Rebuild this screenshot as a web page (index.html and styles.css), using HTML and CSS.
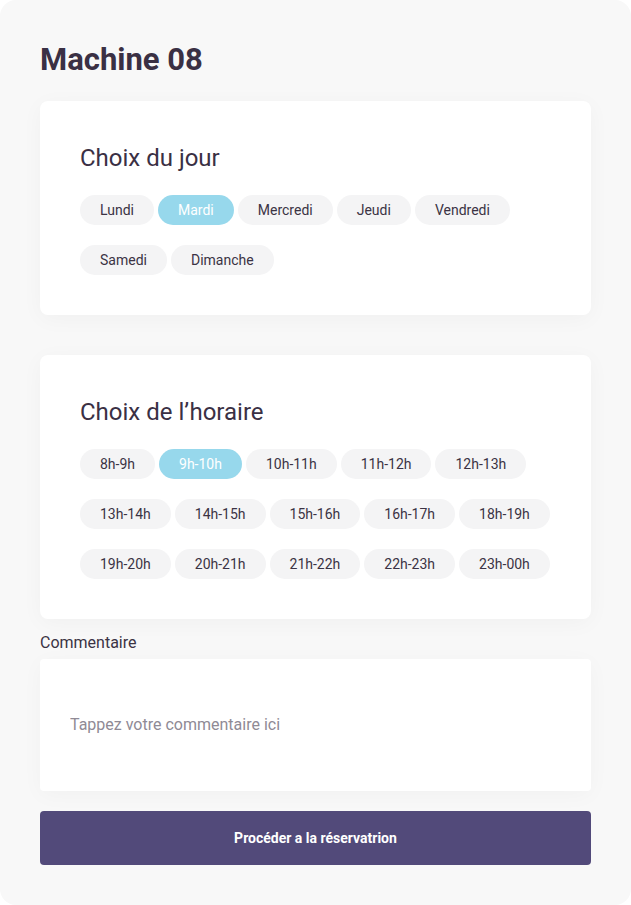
FILE: index.html
```html
<!DOCTYPE html>
<html lang="fr">
<head>
<meta charset="utf-8">
<title>Machine 08</title>
<link rel="stylesheet" href="styles.css">
</head>
<body>
<main class="page">
  <h1 class="title">Machine 08</h1>

  <section class="card">
    <h2 class="card-title">Choix du jour</h2>
    <div class="chips">
      <button class="chip">Lundi</button>
      <button class="chip chip-active">Mardi</button>
      <button class="chip">Mercredi</button>
      <button class="chip">Jeudi</button>
      <button class="chip">Vendredi</button>
      <button class="chip">Samedi</button>
      <button class="chip">Dimanche</button>
    </div>
  </section>

  <section class="card card-hours">
    <h2 class="card-title">Choix de l’horaire</h2>
    <div class="chips">
      <button class="chip">8h-9h</button>
      <button class="chip chip-active">9h-10h</button>
      <button class="chip">10h-11h</button>
      <button class="chip">11h-12h</button>
      <button class="chip">12h-13h</button>
      <button class="chip">13h-14h</button>
      <button class="chip">14h-15h</button>
      <button class="chip">15h-16h</button>
      <button class="chip">16h-17h</button>
      <button class="chip">18h-19h</button>
      <button class="chip">19h-20h</button>
      <button class="chip">20h-21h</button>
      <button class="chip">21h-22h</button>
      <button class="chip">22h-23h</button>
      <button class="chip">23h-00h</button>
    </div>
  </section>

  <label class="comment-label" for="comment">Commentaire</label>
  <div class="comment-box">
    <textarea id="comment" class="comment-input" placeholder="Tappez votre commentaire ici"></textarea>
  </div>

  <button class="submit">Procéder a la réservatrion</button>
</main>
</body>
</html>
```

FILE: styles.css
```css
* {
  box-sizing: border-box;
}

html, body {
  margin: 0;
  padding: 0;
  background: #ffffff;
}

body {
  font-family: Roboto, "Liberation Sans", Arial, sans-serif;
  color: #3b3344;
}

.page {
  width: 631px;
  height: 905px;
  background: #f8f8f8;
  border-radius: 16px;
  padding: 42px 40px 40px 40px;
  display: flex;
  flex-direction: column;
}

.title {
  margin: 0 0 24px 0;
  font-size: 31px;
  font-weight: 700;
  line-height: 35px;
  color: #3a3044;
}

.card {
  flex-shrink: 0;
  background: #ffffff;
  border-radius: 8px;
  box-shadow: 0 4px 22px rgba(0, 0, 0, 0.035);
  padding: 43px 36px 40px 40px;
}

.card-hours {
  margin-top: 40px;
}

.card-title {
  margin: 0 0 23px 0;
  font-size: 24px;
  font-weight: 400;
  line-height: 28px;
  color: #3a3044;
}

.chips {
  display: flex;
  flex-wrap: wrap;
  column-gap: 4px;
  row-gap: 20px;
}

.chip {
  height: 30px;
  padding: 0 20px;
  border: none;
  border-radius: 15px;
  background: #f4f4f5;
  font-family: Roboto, "Liberation Sans", Arial, sans-serif;
  font-size: 14px;
  color: #3b3344;
  line-height: 30px;
  cursor: pointer;
}

.chip-active {
  background: #97d8ec;
  color: #ffffff;
}

.comment-label {
  margin-top: 14px;
  margin-bottom: 7px;
  font-size: 16px;
  line-height: 19px;
  color: #3b3344;
}

.comment-box {
  flex-shrink: 0;
  background: #ffffff;
  border-radius: 4px;
  box-shadow: 0 4px 22px rgba(0, 0, 0, 0.03);
  height: 132px;
  padding: 0 30px;
  display: flex;
  align-items: center;
}

.comment-input {
  width: 100%;
  height: 20px;
  border: none;
  outline: none;
  resize: none;
  padding: 0;
  font-family: Roboto, "Liberation Sans", Arial, sans-serif;
  font-size: 16px;
  line-height: 20px;
  color: #3b3344;
  background: transparent;
  overflow: hidden;
}

.comment-input::placeholder {
  color: #8f8a95;
}

.submit {
  flex-shrink: 0;
  margin-top: 20px;
  height: 54px;
  width: 100%;
  border: none;
  border-radius: 4px;
  background: #524a7a;
  color: #ffffff;
  font-family: Roboto, "Liberation Sans", Arial, sans-serif;
  font-size: 14px;
  font-weight: 700;
  cursor: pointer;
}
```
